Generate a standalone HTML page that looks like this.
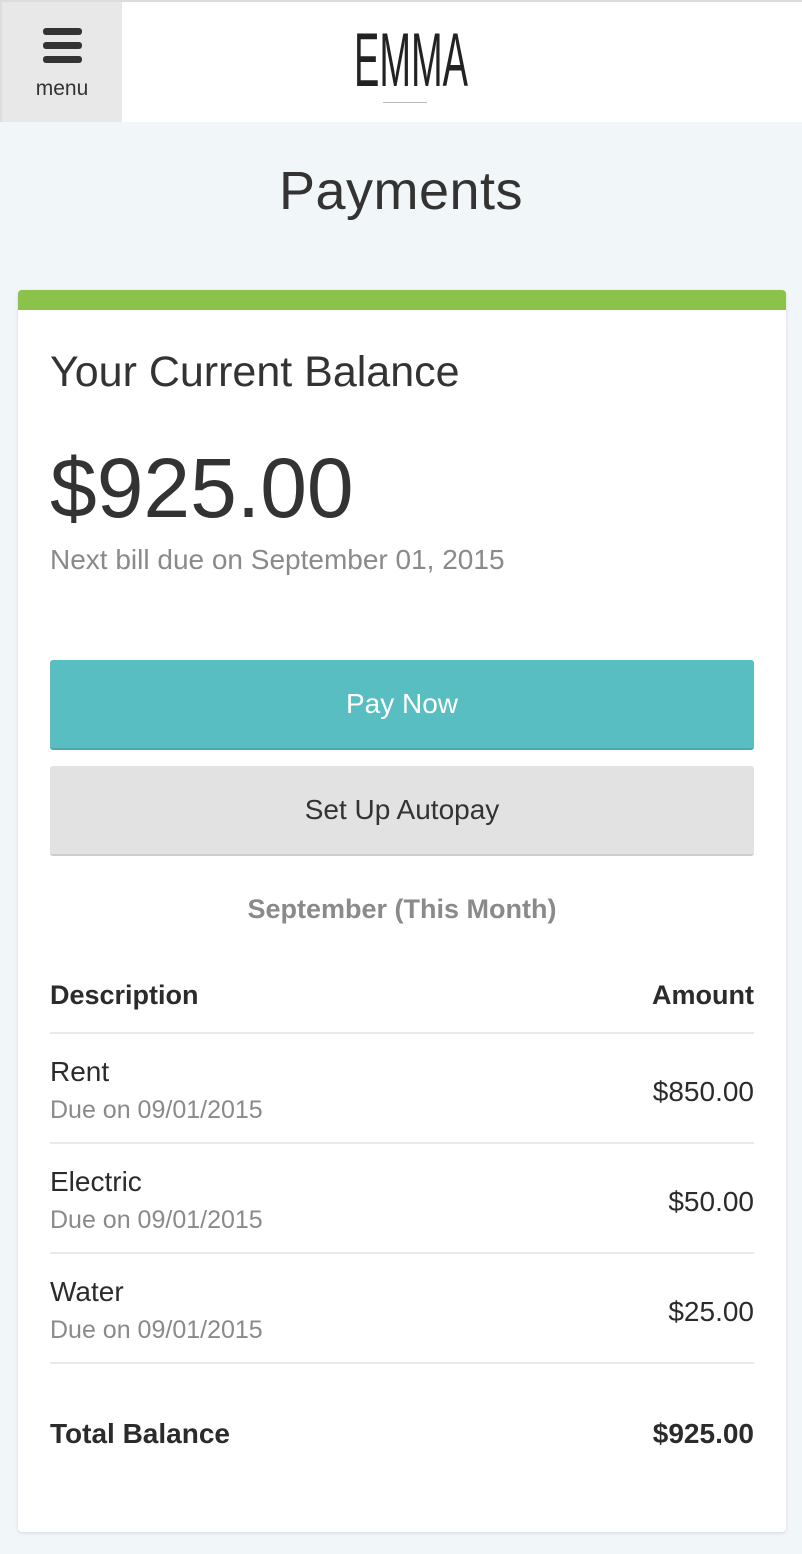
<!DOCTYPE html>
<html><head><meta charset="utf-8"><style>
*{box-sizing:border-box;margin:0;padding:0}
body{width:802px;height:1554px;background:#f1f6f9;font-family:"Liberation Sans",sans-serif;color:#2b2b2b;position:relative;overflow:hidden}
.hdr{position:absolute;left:0;top:0;width:802px;height:122px;background:#fff;border-top:2px solid #ddd;border-left:2px solid #ddd}
.menu{position:absolute;left:0;top:0;width:120px;height:120px;background:#e8e8e8}
.bar{position:absolute;left:41px;width:39px;height:7px;border-radius:3px;background:#333}
.menu span{position:absolute;left:0;width:120px;top:75px;text-align:center;font-size:21px;color:#333}
.logo{position:absolute;left:352px;top:16px;font-size:76px;line-height:86px;transform:scaleX(0.5);transform-origin:left top;color:#222;font-family:"Liberation Sans Narrow","Liberation Sans",sans-serif}
h1{position:absolute;top:160px;width:802px;text-align:center;font-weight:normal;font-size:54px;color:#333;letter-spacing:0.5px}
.card{position:absolute;left:18px;top:290px;width:768px;height:1242px;background:#fff;border-top:20px solid #8bc34a;border-radius:4px;box-shadow:0 1px 3px rgba(0,0,0,.12)}
.abs{position:absolute}
.btn{position:absolute;left:32px;width:704px;height:90px;border-radius:3px;text-align:center;font-size:28px;line-height:88px}
.row{position:absolute;left:32px;width:704px;border-bottom:2px solid #eaeaea}
.r{position:absolute;right:0}
.g{color:#8a8a8a}
</style></head><body>
<div class="hdr">
 <div class="menu"><div class="bar" style="top:26px"></div><div class="bar" style="top:40px"></div><div class="bar" style="top:54px"></div><span>menu</span></div>
 <div class="logo">EMMA</div>
 <div class="abs" style="left:381px;top:100px;width:44px;height:1px;background:#bbb"></div>
</div>
<h1>Payments</h1>
<div class="card">
 <div class="abs" style="left:32px;top:38px;font-size:43px;color:#333">Your Current Balance</div>
 <div class="abs" style="left:32px;top:130px;font-size:84px;color:#333">$925.00</div>
 <div class="abs g" style="left:32px;top:234px;font-size:28px">Next bill due on September 01, 2015</div>
 <div class="btn" style="top:350px;background:#58bec2;color:#fff;border-bottom:2px solid #49a9ad">Pay Now</div>
 <div class="btn" style="top:456px;background:#e2e2e2;color:#333;border-bottom:2px solid #ccc">Set Up Autopay</div>
 <div class="abs g" style="left:0;width:768px;text-align:center;top:584px;font-size:27px;font-weight:bold">September (This Month)</div>
 <div class="row" style="top:670px;height:54px;font-size:27px;font-weight:bold">Description<span class="r">Amount</span></div>
 <div class="row" style="top:724px;height:110px;font-size:28px"><div style="position:absolute;top:22px">Rent</div><div class="g" style="position:absolute;top:62px;font-size:25px">Due on 09/01/2015</div><span class="r" style="top:42px">$850.00</span></div>
 <div class="row" style="top:834px;height:110px;font-size:28px"><div style="position:absolute;top:22px">Electric</div><div class="g" style="position:absolute;top:62px;font-size:25px">Due on 09/01/2015</div><span class="r" style="top:42px">$50.00</span></div>
 <div class="row" style="top:944px;height:110px;font-size:28px"><div style="position:absolute;top:22px">Water</div><div class="g" style="position:absolute;top:62px;font-size:25px">Due on 09/01/2015</div><span class="r" style="top:42px">$25.00</span></div>
 <div class="abs" style="left:32px;width:704px;top:1108px;font-size:28px;font-weight:bold">Total Balance<span class="r">$925.00</span></div>
</div>
</body></html>
